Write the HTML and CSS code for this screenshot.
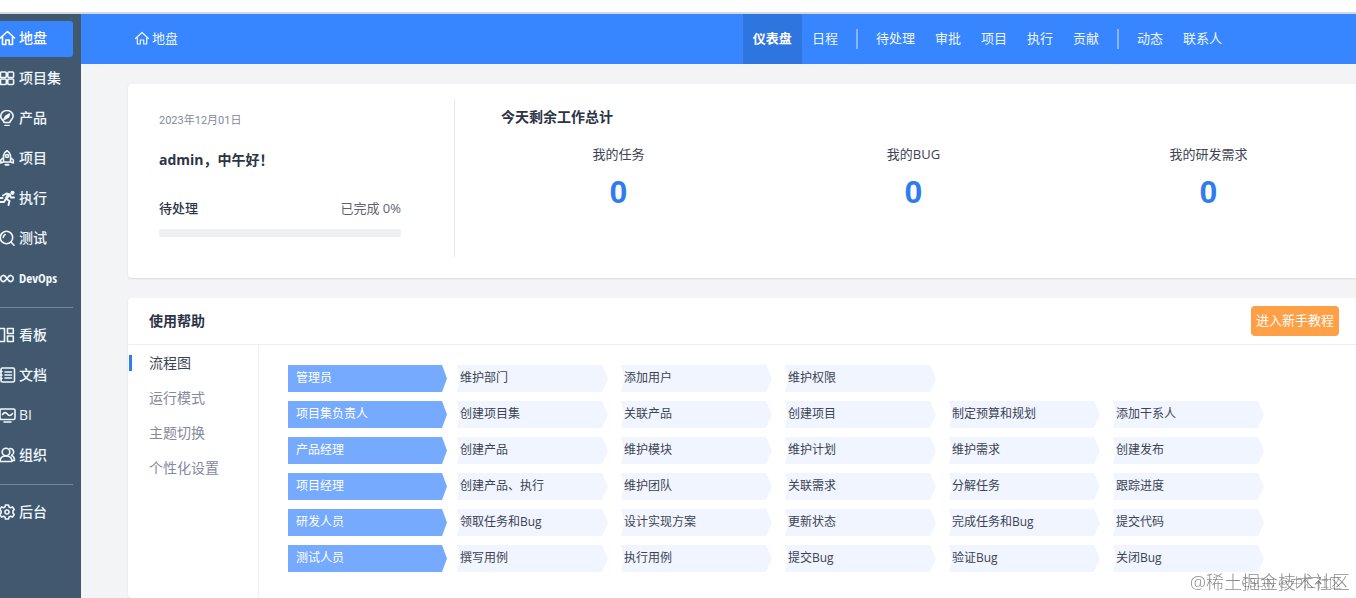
FILE: index.html
```
<!doctype html>
<html lang="zh-CN">
<head>
    <meta charset="UTF-8">
    <meta name="viewport" content="width=device-width, initial-scale=1.0">
    <title>地盘 - 仪表盘</title>
    <link rel="stylesheet" href="styles.css">
</head>
<body>
    <div class="page">
        <!-- Left menu -->
        <nav class="sidebar">
            <a href="#" class="menu-item active">
                <svg viewBox="0 0 16 16"><path d="M.500 8 7.500 1.500 14.500 8M2.500 7v7.500h3.300V10h3.400v4.500h3.300V7"/></svg>地盘</a>
            <a href="#" class="menu-item">
                <svg viewBox="0 0 16 16"><rect x=".5" y="2" width="5.800" height="5.500" rx="1"/><rect x="7.800" y="2" width="5.800" height="5.500" rx="1"/><rect x=".5" y="9" width="5.800" height="5.500" rx="1"/><rect x="7.800" y="9" width="5.800" height="5.500" rx="1"/></svg>项目集</a>
            <a href="#" class="menu-item">
                <svg viewBox="0 0 16 16"><path d="M4 12.500C4 10.500.700 9.500.700 6.300a6.200 5.800 0 0 1 12.400 0C13.100 9.500 9.800 10.500 9.800 12.500zM5 15.500h4"/><path class="solid" d="M4 9.500 5.500 6.500 9.500 4 8.500 7z"/></svg>产品</a>
            <a href="#" class="menu-item">
                <svg viewBox="0 0 16 16"><path d="M3.500 12V5.500Q4 2.500 7 .8 10 2.500 10.500 5.500V12zM3.500 7.500.700 10v3l2.800-1M10.500 7.500l2.800 2.500v3l-2.800-1"/><circle cx="7" cy="6" r="1.500"/><path class="thick" d="M5.500 14.800h3"/></svg>项目</a>
            <a href="#" class="menu-item">
                <svg viewBox="0 0 16 16"><circle class="solid" cx="12.500" cy="2.800" r="1.300"/><path class="thick" d="M3 5.500 6.500 3.500l3.500 1-3.500 4.500 3 2-1 4M5.500 9.500l-1.500 2.500H0M10 5l1 2.500h3M0 8h2.500M7.500 5.500 6 8"/></svg>执行</a>
            <a href="#" class="menu-item">
                <svg viewBox="0 0 16 16"><circle cx="6.500" cy="7.500" r="6.200"/><path d="m11 12 3 3.200M3.200 7.500A3.300 3.300 0 0 1 5.200 4.500"/></svg>测试</a>
            <a href="#" class="menu-item devops">
                <svg viewBox="0 0 16 16"><path d="M7 8.500C5 5.500 4 5 2.800 5.500a3.200 3.200 0 0 0 0 6C4 12 5 11.500 7 8.500s3-3.500 4.200-3a3.200 3.200 0 0 1 0 6c-1.200.5-2.200 0-4.200-3z"/></svg>DevOps</a>
            <hr class="menu-divider">
            <a href="#" class="menu-item">
                <svg viewBox="0 0 16 16"><path d="M-1 1.500h5.500v13H-1M7.500 1.500h5.800v5H7.500zM7.500 9h5.800v5.500H7.500z"/></svg>看板</a>
            <a href="#" class="menu-item">
                <svg viewBox="0 0 16 16"><rect x="1" y="1" width="13.500" height="14" rx="1.500"/><path d="M-1 4.500h3M-1 8h3M-1 11.500h3M5 5h6.500M5 8h6.500M5 11h6.500"/></svg>文档</a>
            <a href="#" class="menu-item">
                <svg viewBox="0 0 16 16"><rect x="0" y="2" width="15" height="10.500" rx="1.500"/><path d="M2.500 7.500c2-3 3.500-2 5-.3s3 2 5-.7M4 15h7"/></svg>BI</a>
            <a href="#" class="menu-item">
                <svg viewBox="0 0 16 16"><circle cx="6" cy="5" r="3.800"/><path d="M0 14.500c0-3.500 2-5.500 6-5.500s6 2 6 5.500zM10 1.500c4 0 5 5 1.500 7 2 .7 3 2.500 3 5h-2"/></svg>组织</a>
            <hr class="menu-divider">
            <a href="#" class="menu-item">
                <svg viewBox="0 0 16 16"><path d="m5.500 1h3l.5 2 1.500.7 2-.8 1.700 2.600-1.300 1.500v2l1.300 1.500-1.700 2.600-2-.8-1.500.7-.5 2h-3l-.5-2-1.500-.7-2 .8L-.200 10.500 1.100 9V7L-.200 5.500 1.500 2.900l2 .8L5 3z"/><circle cx="7" cy="8" r="2"/></svg>后台</a>
        </nav>

        <div class="main">
            <!-- Top bar -->
            <header class="header">
                <a href="#" class="heading">
                    <svg viewBox="0 0 16 16"><path d="M1.500 8.500 8 2.500 14.500 8.500M3.300 7.500v6.500h3V10h3.400v4h3V7.500"/></svg>地盘</a>
                <nav class="navbar">
                    <a href="#" class="active">仪表盘</a>
                    <a href="#">日程</a>
                    <span class="nav-divider"></span>
                    <a href="#">待处理</a>
                    <a href="#">审批</a>
                    <a href="#">项目</a>
                    <a href="#">执行</a>
                    <a href="#">贡献</a>
                    <span class="nav-divider"></span>
                    <a href="#">动态</a>
                    <a href="#">联系人</a>
                </nav>
            </header>

            <div class="content">
                <section class="panel welcome">
                    <div class="greeting">
                        <div class="date">2023年12月01日</div>
                        <h2>admin，中午好！</h2>
                        <div class="progress-label">
                            <strong>待处理</strong>
                            <span>已完成 0%</span>
                        </div>
                        <div class="progress"></div>
                    </div>
                    <div class="summary">
                        <h2>今天剩余工作总计</h2>
                        <div class="stats">
                            <div class="stat">我的任务<a href="#">0</a></div>
                            <div class="stat">我的BUG<a href="#">0</a></div>
                            <div class="stat">我的研发需求<a href="#">0</a></div>
                        </div>
                    </div>
                </section>

                <section class="panel help">
                    <div class="panel-heading">
                        <h2>使用帮助</h2>
                        <button class="tutorial-btn">进入新手教程</button>
                    </div>
                    <div class="help-body">
                        <nav class="tabs">
                            <a href="#" class="active">流程图</a>
                            <a href="#">运行模式</a>
                            <a href="#">主题切换</a>
                            <a href="#">个性化设置</a>
                        </nav>
                        <div class="flowchart">
                            <div class="flow-row">
                                <div class="role">管理员</div>
                                <div class="step">维护部门</div>
                                <div class="step">添加用户</div>
                                <div class="step">维护权限</div>
                            </div>
                            <div class="flow-row">
                                <div class="role">项目集负责人</div>
                                <div class="step">创建项目集</div>
                                <div class="step">关联产品</div>
                                <div class="step">创建项目</div>
                                <div class="step">制定预算和规划</div>
                                <div class="step">添加干系人</div>
                            </div>
                            <div class="flow-row">
                                <div class="role">产品经理</div>
                                <div class="step">创建产品</div>
                                <div class="step">维护模块</div>
                                <div class="step">维护计划</div>
                                <div class="step">维护需求</div>
                                <div class="step">创建发布</div>
                            </div>
                            <div class="flow-row">
                                <div class="role">项目经理</div>
                                <div class="step">创建产品、执行</div>
                                <div class="step">维护团队</div>
                                <div class="step">关联需求</div>
                                <div class="step">分解任务</div>
                                <div class="step">跟踪进度</div>
                            </div>
                            <div class="flow-row">
                                <div class="role">研发人员</div>
                                <div class="step">领取任务和Bug</div>
                                <div class="step">设计实现方案</div>
                                <div class="step">更新状态</div>
                                <div class="step">完成任务和Bug</div>
                                <div class="step">提交代码</div>
                            </div>
                            <div class="flow-row">
                                <div class="role">测试人员</div>
                                <div class="step">撰写用例</div>
                                <div class="step">执行用例</div>
                                <div class="step">提交Bug</div>
                                <div class="step">验证Bug</div>
                                <div class="step">关闭Bug</div>
                            </div>
                        </div>
                    </div>
                </section>
            </div>
        </div>
    </div>

    <div class="watermark">@稀土掘金技术社区</div>
    <div class="watermark small">CSDN @中汇社区</div>
</body>
</html>
```
FILE: styles.css
```
* {
    box-sizing: border-box;
}

body {
    margin: 0;
    padding-top: 12px;
    font-family: "Open Sans", "Noto Sans CJK SC", sans-serif;
    font-size: 13px;
    line-height: 20px;
    color: #3c4353;
    background: #fff;
}

a {
    color: inherit;
    text-decoration: none;
}

h2 {
    margin: 0;
    font-size: 14px;
    line-height: 20px;
    font-weight: bold;
    color: #2c3446;
}

svg {
    width: 16px;
    height: 16px;
    flex: none;
    fill: none;
    stroke: currentColor;
    stroke-width: 1.6;
    stroke-linejoin: round;
    stroke-linecap: round;
}

.solid {
    fill: currentColor;
}

.thick {
    stroke-width: 2;
}

.page {
    display: flex;
    height: calc(100vh - 12px);
    border-top: 2px solid #d3d9de;
    overflow: hidden;
}

/* Left menu */
.sidebar {
    flex: none;
    display: flex;
    flex-direction: column;
    gap: 4px;
    width: 81px;
    padding: 7px 8px 0 0;
    background: #42586e;
}

.menu-item {
    display: flex;
    align-items: center;
    gap: 3px;
    height: 36px;
    padding-bottom: 2px;
    flex: none;
    border-radius: 0 3px 3px 0;
    font-size: 14px;
    font-weight: 500;
    color: #f0f8ff;
    white-space: nowrap;
}

.menu-item.active {
    background: #3785ff;
    color: #fff;
}

.menu-item.devops {
    font-family: "Open Sans Condensed", "Liberation Sans Narrow", "Open Sans", sans-serif;
    font-size: 13px;
}

.menu-divider {
    width: 100%;
    margin: 6px 0;
    border: 0;
    border-top: 1px solid #70869a;
}

/* Top bar */
.main {
    flex: 1;
    min-width: 0;
    display: flex;
    flex-direction: column;
    background: #f2f4f6;
}

.header {
    flex: none;
    display: flex;
    justify-content: space-between;
    height: 50px;
    padding: 0 124px 0 53px;
    background: #3785ff;
    color: #edf6ff;
}

.heading {
    display: flex;
    align-items: center;
    gap: 2px;
    padding-bottom: 2px;
}

.heading svg {
    stroke-width: 1.2;
}

.navbar {
    display: flex;
    align-items: center;
    line-height: 48px;
}

.navbar a {
    height: 50px;
    padding: 0 10px;
}

.navbar .active {
    background: #2f75e0;
    color: #fff;
    font-weight: bold;
}

.nav-divider {
    width: 2px;
    height: 20px;
    margin: 0 8px;
    background: #87b6ff;
}

/* Panels */
.content {
    flex: 1;
    display: flex;
    flex-direction: column;
    gap: 20px;
    padding: 20px 0 0 47px;
}

.panel {
    background: #fff;
    border-radius: 4px 0 0 4px;
    box-shadow: 0 1px 2px rgba(0, 0, 0, 0.1);
}

.welcome {
    display: flex;
    padding: 15px 0 21px;
}

.greeting {
    width: 327px;
    padding: 12px 53px 20px 31px;
    border-right: 1px solid #e6e8eb;
}

.date {
    font-family: Roboto, "Noto Sans CJK SC", sans-serif;
    font-size: 11px;
    color: #838a9d;
}

.greeting h2 {
    margin-top: 19px;
}

.progress-label {
    display: flex;
    justify-content: space-between;
    margin-top: 28px;
    color: #5e626d;
}

.progress-label strong {
    font-weight: 500;
    color: #2c3446;
}

.progress {
    height: 8px;
    margin-top: 11px;
    background: #eeeff1;
    border-radius: 2px;
}

.summary {
    flex: 1;
    padding-top: 8px;
}

.summary h2 {
    padding-left: 46px;
}

.stats {
    display: grid;
    grid-template-columns: repeat(3, 1fr);
    padding: 17px 0 0 16px;
}

.stat {
    text-align: center;
}

.stat a {
    display: block;
    margin-top: 8px;
    font-family: "Liberation Sans", Arial, sans-serif;
    font-size: 32px;
    line-height: 40px;
    font-weight: bold;
    color: #2f7bf0;
}

/* Help */
.help {
    flex: 1;
    display: flex;
    flex-direction: column;
}

.panel-heading {
    display: flex;
    align-items: center;
    justify-content: space-between;
    height: 47px;
    padding: 0 17px 0 21px;
    border-bottom: 1px solid #edeef2;
}

.tutorial-btn {
    height: 30px;
    padding: 0 5px 3px;
    border: 0;
    border-radius: 4px;
    background: #ff9f46;
    color: #fff;
    font-family: inherit;
    font-size: 13px;
    cursor: pointer;
}

.help-body {
    flex: 1;
    display: flex;
}

.tabs {
    width: 131px;
    padding-top: 10px;
    border-right: 1px solid #edeef2;
    font-size: 14px;
    color: #838a9d;
}

.tabs a {
    display: block;
    height: 16px;
    margin: 0 0 19px 1px;
    padding-left: 17px;
    border-left: 3px solid transparent;
    line-height: 16px;
}

.tabs .active {
    border-left-color: #2f7bf0;
    color: #3c4353;
}

.flowchart {
    display: flex;
    flex-direction: column;
    gap: 9px;
    padding: 20px 0 0 29px;
    font-size: 12px;
    line-height: 26px;
}

.flow-row {
    display: flex;
}

.role,
.step {
    height: 27px;
    white-space: nowrap;
}

.role {
    width: 159px;
    margin-right: 10px;
    padding-left: 8px;
    background: #76aaff;
    color: #fff;
    clip-path: polygon(0 0, calc(100% - 5px) 0, 100% 50%, calc(100% - 5px) 100%, 0 100%);
}

.step {
    width: 151px;
    margin-right: 13px;
    padding-left: 3px;
    background: #f0f5ff;
    clip-path: polygon(0 0, calc(100% - 6px) 0, 100% 50%, calc(100% - 6px) 100%, 0 100%, 3px 50%);
}

/* Watermark */
.watermark {
    position: fixed;
    right: 6px;
    bottom: 4px;
    font-size: 18px;
    line-height: 24px;
    font-weight: 300;
    color: rgba(90, 90, 90, 0.7);
}

.watermark.small {
    right: 14px;
    font-size: 13px;
}
```
